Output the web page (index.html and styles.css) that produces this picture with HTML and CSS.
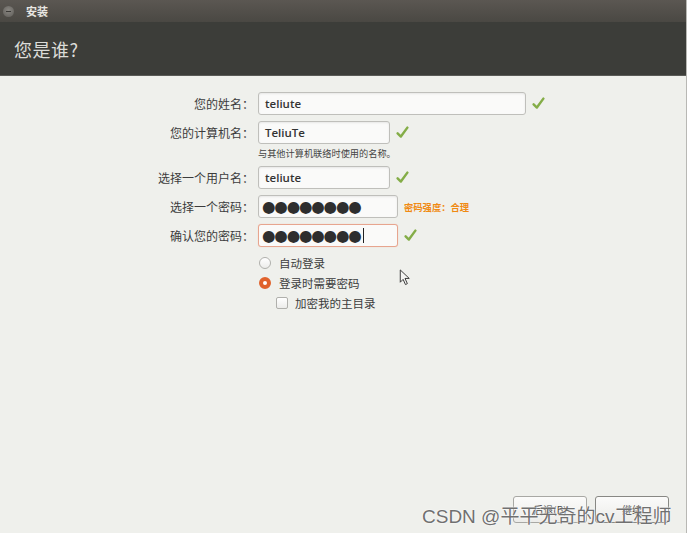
FILE: index.html
```html
<!DOCTYPE html>
<html lang="zh-CN">
<head>
    <meta charset="UTF-8">
    <title>安装</title>
    <link rel="stylesheet" href="styles.css">
</head>
<body>
<div class="window">
    <div class="titlebar">
        <span class="close-btn"></span>
        <span class="title">安装</span>
    </div>
    <div class="header">
        <h1>您是谁?</h1>
    </div>

    <div class="content">
        <div class="form">
            <div class="row">
                <label>您的姓名：</label>
                <div class="field wide">teliute</div>
                <svg class="check" viewBox="0 0 16 16"><path d="M2 9 L6 13 L14 2" /></svg>
            </div>
            <div class="row">
                <label>您的计算机名：</label>
                <div class="field">TeliuTe</div>
                <svg class="check" viewBox="0 0 16 16"><path d="M2 9 L6 13 L14 2" /></svg>
            </div>
            <div class="hint">与其他计算机联络时使用的名称。</div>
            <div class="row">
                <label>选择一个用户名：</label>
                <div class="field">teliute</div>
                <svg class="check" viewBox="0 0 16 16"><path d="M2 9 L6 13 L14 2" /></svg>
            </div>
            <div class="row">
                <label>选择一个密码：</label>
                <div class="field pw">●●●●●●●●</div>
                <span class="strength">密码强度：合理</span>
            </div>
            <div class="row">
                <label>确认您的密码：</label>
                <div class="field pw focus">●●●●●●●●<span class="caret"></span></div>
                <svg class="check" viewBox="0 0 16 16"><path d="M2 9 L6 13 L14 2" /></svg>
            </div>

            <div class="options">
                <div class="opt"><span class="radio"></span>自动登录</div>
                <div class="opt"><span class="radio on"></span>登录时需要密码</div>
                <div class="opt sub"><span class="box"></span>加密我的主目录</div>
            </div>
        </div>

        <svg class="pointer" viewBox="0 0 12 18"><path d="M1 1 L1 14 L4 11 L6.5 16.5 L8.5 15.5 L6 10 L10.5 10 Z" /></svg>
    </div>

    <div class="footer">
        <button class="btn">后退(B)</button>
        <button class="btn primary">继续</button>
    </div>

    <div class="watermark">CSDN @平平无奇的cv工程师</div>
</div>
</body>
</html>
```

FILE: styles.css
```css
html, body {
    margin: 0;
    padding: 0;
}
body {
    font-family: "Noto Sans CJK SC", "DejaVu Sans", sans-serif;
    background-color: #eff0ec;
    width: 687px;
    height: 533px;
    overflow: hidden;
}
.window {
    position: relative;
    height: 533px;
    display: flex;
    flex-direction: column;
    border-right: 1px solid #b8b8b4;
    box-sizing: border-box;
}
.titlebar {
    height: 22px;
    background: linear-gradient(#5b5752, #4a4843);
    display: flex;
    align-items: center;
    padding-left: 3px;
}
.close-btn {
    width: 11px;
    height: 11px;
    border-radius: 50%;
    background: radial-gradient(circle at 50% 40%, #8a8782, #5e5c58);
    position: relative;
}
.close-btn::after {
    content: "";
    position: absolute;
    left: 3px;
    right: 3px;
    top: 5px;
    height: 1px;
    background: #3a3936;
}
.title {
    color: #e8e6e2;
    font-size: 11px;
    font-weight: bold;
    margin-left: 12px;
}
.header {
    height: 54px;
    background-color: #3c3d39;
    border-bottom: 1px solid #5a5b57;
    box-sizing: border-box;
    display: flex;
    align-items: center;
    padding-left: 14px;
}
.header h1 {
    margin: 0;
    color: #dcdcd8;
    font-size: 18px;
    font-weight: normal;
    letter-spacing: 0.5px;
}
.content {
    flex: 1;
    position: relative;
}
.form {
    padding-top: 16px;
}
.row {
    display: flex;
    align-items: center;
    height: 23px;
    margin-bottom: 6px;
}
.row label {
    width: 258px;
    text-align: right;
    font-size: 12px;
    color: #3c3c3c;
    padding-right: 4px;
    box-sizing: border-box;
}
.field {
    width: 132px;
    height: 23px;
    box-sizing: border-box;
    border: 1px solid #bfbfbb;
    border-radius: 3px;
    background: #fafaf9;
    box-shadow: inset 0 1px 2px rgba(0,0,0,0.08);
    font-family: "Open Sans", "DejaVu Sans", sans-serif;
    font-size: 11.5px;
    font-weight: 600;
    color: #333;
    padding-left: 6px;
    display: flex;
    align-items: center;
}
.field.wide {
    width: 268px;
}
.field.pw {
    width: 140px;
    font-family: "DejaVu Sans", sans-serif;
    font-size: 15.5px;
    font-weight: normal;
    letter-spacing: -1.2px;
    color: #2e2e2e;
    padding-left: 3px;
}
.field.focus {
    border-color: #e7a58f;
    box-shadow: 0 0 1px #f0c0b0;
}
.caret {
    display: inline-block;
    width: 1px;
    height: 15px;
    background: #222;
    margin-left: 2px;
}
.check {
    width: 13px;
    height: 13px;
    margin-left: 6px;
    fill: none;
    stroke: #84ad47;
    stroke-width: 3;
    stroke-linecap: round;
    stroke-linejoin: round;
}
.strength {
    margin-left: 6px;
    font-size: 9.3px;
    font-weight: bold;
    color: #f08a12;
}
.hint {
    margin: -3px 0 6px 258px;
    font-size: 9.2px;
    line-height: 13px;
    color: #444;
}
.options {
    padding-left: 259px;
    margin-top: 4px;
}
.opt {
    display: flex;
    align-items: center;
    height: 20px;
    font-size: 11.5px;
    color: #3c3c3c;
}
.opt.sub {
    padding-left: 17px;
}
.radio {
    width: 12px;
    height: 12px;
    border-radius: 50%;
    border: 1px solid #b0b0ac;
    background: linear-gradient(#fff, #ececea);
    margin-right: 8px;
    box-sizing: border-box;
}
.radio.on {
    border: 4px solid #e0622c;
    background: #fff;
}
.box {
    width: 12px;
    height: 12px;
    border-radius: 2px;
    border: 1px solid #b0b0ac;
    background: linear-gradient(#fff, #ececea);
    margin-right: 7px;
    box-sizing: border-box;
}
.pointer {
    position: absolute;
    left: 399px;
    top: 193px;
    width: 12px;
    height: 17px;
    fill: #f4f4f2;
    stroke: #333;
    stroke-width: 1;
}
.footer {
    display: flex;
    justify-content: flex-end;
    gap: 8px;
    padding: 0 17px 10px 0;
}
.btn {
    width: 74px;
    height: 27px;
    border: 1px solid #a8a8a4;
    border-radius: 3px;
    background: linear-gradient(#fbfbfa, #ecece9);
    font-family: "Noto Sans CJK SC", sans-serif;
    font-size: 10px;
    color: #444;
}
.btn.primary {
    border-color: #888884;
}
.watermark {
    position: absolute;
    left: 422px;
    top: 501px;
    font-family: "Liberation Sans", "Noto Sans CJK SC", sans-serif;
    font-size: 19px;
    color: #707070;
    text-shadow: 0 0 2px #fff, 0 0 1px #fff;
    white-space: nowrap;
}
```
